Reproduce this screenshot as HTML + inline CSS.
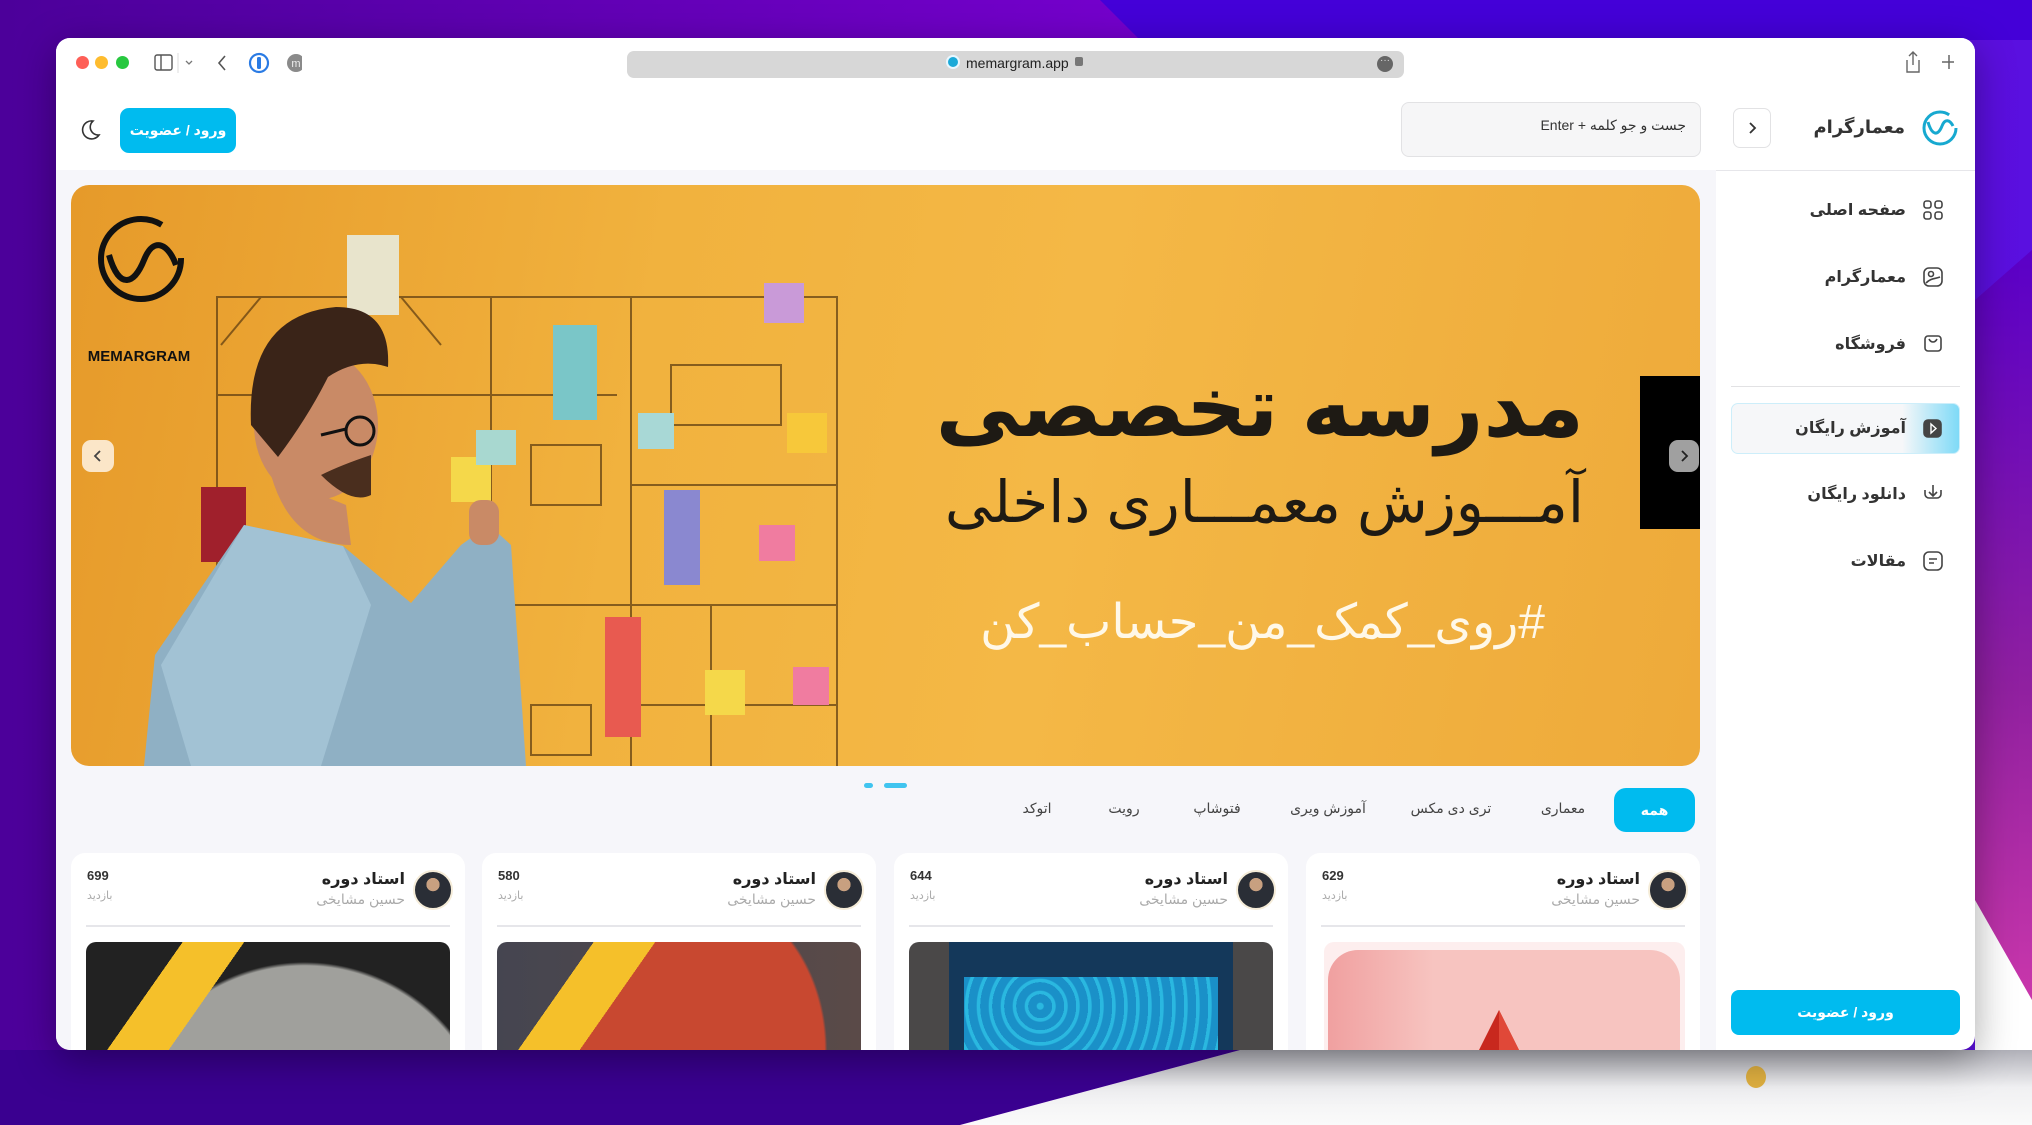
<!DOCTYPE html>
<html><head><meta charset="utf-8">
<style>
*{margin:0;padding:0;box-sizing:border-box}
html,body{width:2032px;height:1125px;overflow:hidden}
body{position:relative;font-family:"Liberation Sans","Noto Sans CJK SC",sans-serif;background:#4a00a8}
.abs{position:absolute}
.win{position:absolute;left:56px;top:38px;width:1919px;height:1012px;background:#fff;border-radius:14px;overflow:hidden;box-shadow:0 10px 40px rgba(0,0,0,.35)}
.fa{font-family:"Liberation Sans","Noto Sans CJK SC","DejaVu Sans",sans-serif;direction:rtl;white-space:nowrap}
.tab{position:absolute;top:762px;font-size:14px;color:#444;transform:translateX(-50%)}
.card{position:absolute;top:815px;width:394px;height:197px;background:#fff;border-radius:14px 14px 0 0;overflow:hidden}
.img{position:absolute;left:15px;right:15px;top:89px;height:108px;border-radius:10px 10px 0 0}
.side{position:absolute;right:69px;font-size:16px;color:#333;font-weight:bold}
</style></head><body>
<svg class="abs" style="left:0;top:0" width="2032" height="1125">
<defs>
<linearGradient id="bg1" x1="0" y1="0" x2="1" y2="0"><stop offset="0" stop-color="#4c009a"/><stop offset=".55" stop-color="#7400cc"/><stop offset="1" stop-color="#5a10e0"/></linearGradient>
<linearGradient id="bg2" x1="0" y1="0" x2="0" y2="1"><stop offset="0" stop-color="#5a00c8"/><stop offset=".5" stop-color="#9020a0"/><stop offset="1" stop-color="#e040b0"/></linearGradient>
<linearGradient id="bg3" x1="0" y1="0" x2="0" y2="1"><stop offset="0" stop-color="#b0b0b8"/><stop offset=".5" stop-color="#f0f0f2"/><stop offset="1" stop-color="#fafafa"/></linearGradient>
</defs>
<rect width="2032" height="1125" fill="url(#bg1)"/>
<polygon points="1100,0 2032,0 2032,40 1140,40" fill="#4400d8"/>
<polygon points="1975,300 2032,250 2032,1125 1975,1125" fill="url(#bg2)"/>
<polygon points="1975,900 2032,1000 2032,1125 1975,1125" fill="#ffffff"/>
<polygon points="0,1050 1240,1050 960,1125 0,1125" fill="#3a0090"/>
<polygon points="1240,1050 2032,1050 2032,1125 960,1125" fill="url(#bg3)"/>
<ellipse cx="1756" cy="1077" rx="10" ry="11" fill="#e0b040"/>
</svg>

<div class="win">
 <div class="abs" style="left:0;top:0;width:1919px;height:50px;background:#fff"></div>
 <div class="abs" style="left:20px;top:18px;width:13px;height:13px;border-radius:50%;background:#fe5f57"></div>
 <div class="abs" style="left:39px;top:18px;width:13px;height:13px;border-radius:50%;background:#febc2e"></div>
 <div class="abs" style="left:60px;top:18px;width:13px;height:13px;border-radius:50%;background:#28c840"></div>
 <svg class="abs" style="left:96px;top:14px" width="150" height="22">
  <rect x="3" y="3" width="17" height="15" rx="2" fill="none" stroke="#555" stroke-width="1.4"/><line x1="9" y1="3" x2="9" y2="18" stroke="#555" stroke-width="1.4"/>
  <line x1="26" y1="1" x2="26" y2="21" stroke="#ddd"/>
  <path d="M34 9 l3 3 3-3" fill="none" stroke="#777" stroke-width="1.3"/>
  <path d="M73 4 l-6 7 6 7" fill="none" stroke="#555" stroke-width="1.6"/>
  <circle cx="107" cy="11" r="9" fill="none" stroke="#2a7be4" stroke-width="2.2"/><rect x="105" y="5" width="4" height="12" rx="1.5" fill="#2a7be4"/>
  <circle cx="144" cy="11" r="9" fill="#8a8a8a"/><text x="144" y="15" text-anchor="middle" font-size="11" fill="#eee" font-family="Liberation Sans">m</text>
 </svg>
 <div class="abs" style="left:571px;top:13px;width:777px;height:27px;background:#d7d7d7;border-radius:7px"></div>
 <div class="abs" style="left:890px;top:17px;width:14px;height:14px;border-radius:50%;background:#1aa9d8;border:2px solid #e8f7ff"></div>
 <div class="abs" style="left:910px;top:17px;font-size:14px;color:#222">memargram.app</div>
 <div class="abs" style="left:1019px;top:19px;width:8px;height:9px;background:#777;border-radius:2px"></div>
 <div class="abs" style="left:1321px;top:18px;width:16px;height:16px;border-radius:50%;background:#666;color:#ddd;font-size:10px;line-height:10px;text-align:center">···</div>
 <svg class="abs" style="left:1848px;top:12px" width="50" height="26">
  <path d="M3 10 v12 h12 v-12 M9 2 v13 M5 6 l4-4 4 4" fill="none" stroke="#666" stroke-width="1.4"/>
  <path d="M45 5 v14 M38 12 h14" stroke="#666" stroke-width="1.5"/>
 </svg>

 <svg class="abs" style="left:22px;top:80px" width="24" height="24"><path d="M15 3 a9 9 0 1 0 6 14 a8 8 0 0 1 -6 -14z" fill="none" stroke="#333" stroke-width="1.6"/></svg>
 <div class="abs fa" style="left:64px;top:70px;width:116px;height:45px;background:#00bbef;border-radius:9px;color:#fff;font-weight:bold;font-size:14px;line-height:45px;text-align:center">ورود / عضویت</div>
 <div class="abs" style="left:1345px;top:64px;width:300px;height:55px;background:#f6f6f7;border:1px solid #e2e2e4;border-radius:8px"></div>
 <div class="abs fa" style="left:1400px;top:79px;width:230px;text-align:right;font-size:14px;color:#333">جست و جو کلمه + Enter</div>
 <div class="abs" style="left:1677px;top:70px;width:38px;height:40px;border:1px solid #e2e2e4;border-radius:7px"></div>
 <svg class="abs" style="left:1688px;top:82px" width="16" height="16"><path d="M6 3 l5 5 -5 5" fill="none" stroke="#333" stroke-width="1.8"/></svg>
 <div class="abs fa" style="left:1680px;top:79px;width:169px;text-align:right;font-size:18px;font-weight:bold;color:#333">معمارگرام</div>
 <svg class="abs" style="left:1864px;top:70px" width="40" height="40"><circle cx="20" cy="20" r="16" fill="none" stroke="#17a9d0" stroke-width="3" stroke-dasharray="85 16"/><path d="M8 14 c4 14 10 14 14 4 c3 -8 8 -6 11 0" fill="none" stroke="#17a9d0" stroke-width="3"/></svg>

 <div class="abs" style="left:0;top:132px;width:1660px;height:880px;background:#f6f6fa"></div>
 <div class="abs" style="left:1660px;top:132px;width:259px;height:1px;background:#e6e6ea"></div>

 <div class="side fa" style="top:162px">صفحه اصلی</div>
 <div class="side fa" style="top:229px">معمارگرام</div>
 <div class="side fa" style="top:296px">فروشگاه</div>
 <div class="abs" style="left:1675px;top:348px;width:229px;height:1px;background:#e2e2e4"></div>
 <div class="abs" style="left:1675px;top:365px;width:229px;height:51px;border-radius:7px;border:1px solid #cdeefa;background:linear-gradient(90deg,#f6f7f9 0%,#f6f7f9 75%,#7fdaf7 100%)"></div>
 <div class="side fa" style="top:380px">آموزش رایگان</div>
 <div class="side fa" style="top:446px">دانلود رایگان</div>
 <div class="side fa" style="top:513px">مقالات</div>
 <svg class="abs" style="left:1865px;top:155px" width="24" height="400" fill="none" stroke="#444" stroke-width="1.6">
  <rect x="3" y="8" width="7" height="7" rx="2.5"/><rect x="14" y="8" width="7" height="7" rx="2.5"/><rect x="3" y="19" width="7" height="7" rx="2.5"/><rect x="14" y="19" width="7" height="7" rx="2.5"/>
  <rect x="3" y="75" width="18" height="18" rx="5"/><circle cx="10" cy="81" r="2.5"/><path d="M5 90 c5 -5 9 -4 14 -6"/>
  <path d="M4 155 v-9 a3 3 0 0 1 3 -3 h10 a3 3 0 0 1 3 3 v9 a3 3 0 0 1 -3 3 h-10 a3 3 0 0 1 -3 -3z M8 146 c2 4 6 4 8 0"/>
  <rect x="3" y="227" width="17" height="17" rx="4" fill="#444"/><path d="M10 231 l5 4.5 -5 4.5z" stroke="#fff" stroke-width="1.4"/>
  <path d="M4 297 v4 a4 4 0 0 0 4 4 h8 a4 4 0 0 0 4 -4 v-4 M12 292 v11 M8 299 l4 4 4 -4"/>
  <rect x="3" y="359" width="18" height="18" rx="5"/><path d="M8 366 h8 M8 370 h5"/>
 </svg>
 <div class="abs fa" style="left:1675px;top:952px;width:229px;height:45px;background:#00bbef;border-radius:8px;color:#fff;font-weight:bold;font-size:14px;line-height:45px;text-align:center">ورود / عضویت</div>

 <div class="abs" style="left:15px;top:147px;width:1629px;height:581px;border-radius:18px;overflow:hidden;background:linear-gradient(100deg,#e69a2a 0%,#f1b23e 35%,#f4b846 60%,#eeaa3a 100%)">
  <svg class="abs" style="left:0;top:0" width="1629" height="581">
   <g fill="none" stroke="#5a3a10" stroke-width="2" opacity=".7">
    <rect x="146" y="112" width="620" height="598"/>
    <path d="M146 210 h400 M420 112 v600 M560 112 v600 M420 420 h346 M560 300 h206 M146 520 h274 M300 420 v290 M640 420 v290 M560 520 h206"/>
    <path d="M150 160 l40 -48 h140 l40 48"/>
    <rect x="460" y="260" width="70" height="60"/><rect x="600" y="180" width="110" height="60"/><rect x="460" y="520" width="60" height="50"/>
   </g>
   <g>
    <rect x="276" y="50" width="52" height="80" fill="#e8e4cc"/><rect x="482" y="140" width="44" height="95" fill="#7ac6c8"/>
    <rect x="693" y="98" width="40" height="40" fill="#c99ad8"/><rect x="130" y="302" width="45" height="75" fill="#a0202c"/>
    <rect x="534" y="432" width="36" height="120" fill="#e85a50"/><rect x="593" y="305" width="36" height="95" fill="#8a88d0"/>
    <rect x="380" y="272" width="40" height="45" fill="#f5d84a"/><rect x="405" y="245" width="40" height="35" fill="#a8d8d0"/>
    <rect x="567" y="228" width="36" height="36" fill="#a8d8d6"/><rect x="716" y="228" width="40" height="40" fill="#f7c83a"/>
    <rect x="688" y="340" width="36" height="36" fill="#f07ca0"/><rect x="634" y="485" width="40" height="45" fill="#f5d84a"/>
    <rect x="722" y="482" width="36" height="38" fill="#f07ca0"/>
   </g>
   <polygon points="173,340 272,361 340,418 390,360 418,340 440,360 455,581 73,581 84,470" fill="#8fb0c4"/>
   <polygon points="173,340 272,361 300,420 250,581 120,581 90,480" fill="#a2c2d4"/>
   <rect x="398" y="315" width="30" height="45" rx="12" fill="#c98a66"/>
   <path d="M200 290 q20 70 80 70 l-5 -40z" fill="#c98a66"/>
   <ellipse cx="245" cy="240" rx="62" ry="75" fill="#c98a66"/>
   <path d="M180 240 q-5 -110 85 -118 q55 0 52 60 q-30 -10 -60 10 q-20 40 -50 80z" fill="#3a2418"/>
   <path d="M250 290 q30 30 50 20 l0 -40 q-30 10 -50 20z" fill="#4a2e1e"/>
   <g fill="none" stroke="#111" stroke-width="3"><circle cx="289" cy="246" r="14"/><path d="M275 244 l-25 6"/></g>
   <g fill="none" stroke="#111" stroke-width="6">
    <circle cx="70" cy="74" r="40" stroke-dasharray="210 40"/><path d="M38 70 c10 35 25 30 35 5 c10 -25 25 -15 32 5"/>
   </g>
   <text x="68" y="176" text-anchor="middle" font-family="Liberation Sans" font-weight="bold" font-size="15" fill="#111">MEMARGRAM</text>
  </svg>
  <div class="abs" style="left:1569px;top:191px;width:60px;height:153px;background:#000"></div>
  <div class="abs" style="left:1598px;top:255px;width:30px;height:32px;border-radius:9px;background:#a0a0a0"></div>
  <svg class="abs" style="left:1605px;top:263px" width="16" height="16"><path d="M6 3 l5 5 -5 5" fill="none" stroke="#222" stroke-width="1.8"/></svg>
  <div class="abs" style="left:11px;top:255px;width:32px;height:32px;border-radius:9px;background:#fbe6c8"></div>
  <svg class="abs" style="left:19px;top:263px" width="16" height="16"><path d="M10 3 l-5 5 5 5" fill="none" stroke="#444" stroke-width="1.8"/></svg>
  <div class="abs fa" style="left:800px;top:172px;width:713px;text-align:right;font-size:84px;line-height:100px;font-weight:bold;color:#1e1a14">مدرسه تخصصی</div>
  <div class="abs fa" style="left:800px;top:283px;width:713px;text-align:right;font-size:58px;line-height:70px;color:#1e1a14">آمـــوزش معمـــاری داخلی</div>
  <div class="abs fa" style="left:700px;top:408px;width:774px;text-align:right;font-size:48px;line-height:60px;color:#fff8e8">#روی_کمک_من_حساب_کن</div>
 </div>

 <div class="abs" style="left:808px;top:745px;width:9px;height:5px;border-radius:3px;background:#40c4ef"></div>
 <div class="abs" style="left:828px;top:745px;width:23px;height:5px;border-radius:3px;background:#40c4ef"></div>

 <div class="abs fa" style="left:1558px;top:750px;width:81px;height:44px;border-radius:12px;background:#00bbef;color:#fff;font-weight:bold;font-size:14px;line-height:44px;text-align:center">همه</div>
 <div class="tab fa" style="left:1507px">معماری</div>
 <div class="tab fa" style="left:1395px">تری دی مکس</div>
 <div class="tab fa" style="left:1272px">آموزش ویری</div>
 <div class="tab fa" style="left:1161px">فتوشاپ</div>
 <div class="tab fa" style="left:1068px">رویت</div>
 <div class="tab fa" style="left:981px">اتوکد</div>

 <div class="card" style="left:1250px">
  <div class="abs" style="right:12px;top:17px;width:40px;height:40px;border-radius:50%;background:radial-gradient(circle at 50% 35%,#c8a080 0 22%,#2a2e36 23%);border:2px solid #f5ecd8"></div>
  <div class="abs fa" style="right:60px;top:16px;font-size:16px;font-weight:bold;color:#222">استاد دوره</div>
  <div class="abs fa" style="right:60px;top:38px;font-size:14px;color:#aaa">حسین مشایخی</div>
  <div class="abs" style="left:16px;top:15px;font-size:13px;font-weight:bold;color:#333">629</div>
  <div class="abs fa" style="left:16px;top:36px;font-size:11px;color:#aaa">بازدید</div>
  <div class="abs" style="left:15px;right:15px;top:72px;height:2px;background:#e6e6ea"></div>
  <div class="img" style="left:18px;background:#fdeeee"></div>
  <div class="abs" style="left:22px;right:20px;top:97px;height:100px;border-radius:30px 30px 0 0;background:linear-gradient(90deg,#f0a0a0,#f7c4c0 30%)"></div>
  <svg class="abs" style="left:168px;top:157px" width="50" height="40"><polygon points="25,0 5,40 45,40" fill="#c8281e"/><polygon points="25,0 25,40 45,40" fill="#e04838"/></svg>
 </div>
 <div class="card" style="left:838px">
  <div class="abs" style="right:12px;top:17px;width:40px;height:40px;border-radius:50%;background:radial-gradient(circle at 50% 35%,#c8a080 0 22%,#2a2e36 23%);border:2px solid #f5ecd8"></div>
  <div class="abs fa" style="right:60px;top:16px;font-size:16px;font-weight:bold;color:#222">استاد دوره</div>
  <div class="abs fa" style="right:60px;top:38px;font-size:14px;color:#aaa">حسین مشایخی</div>
  <div class="abs" style="left:16px;top:15px;font-size:13px;font-weight:bold;color:#333">644</div>
  <div class="abs fa" style="left:16px;top:36px;font-size:11px;color:#aaa">بازدید</div>
  <div class="abs" style="left:15px;right:15px;top:72px;height:2px;background:#e6e6ea"></div>
  <div class="img" style="background:linear-gradient(90deg,#4a4848 0 40px,#14385a 40px calc(100% - 40px),#4a4848 calc(100% - 40px))"></div>
  <div class="abs" style="left:70px;right:70px;top:124px;height:73px;background:repeating-radial-gradient(circle at 30% 40%,#2ab8e0 0 3px,#1a90c8 4px 12px)"></div>
 </div>
 <div class="card" style="left:426px">
  <div class="abs" style="right:12px;top:17px;width:40px;height:40px;border-radius:50%;background:radial-gradient(circle at 50% 35%,#c8a080 0 22%,#2a2e36 23%);border:2px solid #f5ecd8"></div>
  <div class="abs fa" style="right:60px;top:16px;font-size:16px;font-weight:bold;color:#222">استاد دوره</div>
  <div class="abs fa" style="right:60px;top:38px;font-size:14px;color:#aaa">حسین مشایخی</div>
  <div class="abs" style="left:16px;top:15px;font-size:13px;font-weight:bold;color:#333">580</div>
  <div class="abs fa" style="left:16px;top:36px;font-size:11px;color:#aaa">بازدید</div>
  <div class="abs" style="left:15px;right:15px;top:72px;height:2px;background:#e6e6ea"></div>
  <div class="img" style="background:linear-gradient(125deg,transparent 0 22%,#f5c02a 22% 36%,transparent 36%),radial-gradient(ellipse 130px 160px at 55% 100%,#c84830 0 98%,transparent 100%),linear-gradient(90deg,#454550,#5a4a48)"></div>
 </div>
 <div class="card" style="left:15px">
  <div class="abs" style="right:12px;top:17px;width:40px;height:40px;border-radius:50%;background:radial-gradient(circle at 50% 35%,#c8a080 0 22%,#2a2e36 23%);border:2px solid #f5ecd8"></div>
  <div class="abs fa" style="right:60px;top:16px;font-size:16px;font-weight:bold;color:#222">استاد دوره</div>
  <div class="abs fa" style="right:60px;top:38px;font-size:14px;color:#aaa">حسین مشایخی</div>
  <div class="abs" style="left:16px;top:15px;font-size:13px;font-weight:bold;color:#333">699</div>
  <div class="abs fa" style="left:16px;top:36px;font-size:11px;color:#aaa">بازدید</div>
  <div class="abs" style="left:15px;right:15px;top:72px;height:2px;background:#e6e6ea"></div>
  <div class="img" style="background:linear-gradient(125deg,transparent 0 22%,#f5c02a 22% 36%,transparent 36%),radial-gradient(circle 190px at 60% 210px,#a0a09c 0 98%,#222 100%)"></div>
 </div>
</div>
</body></html>
